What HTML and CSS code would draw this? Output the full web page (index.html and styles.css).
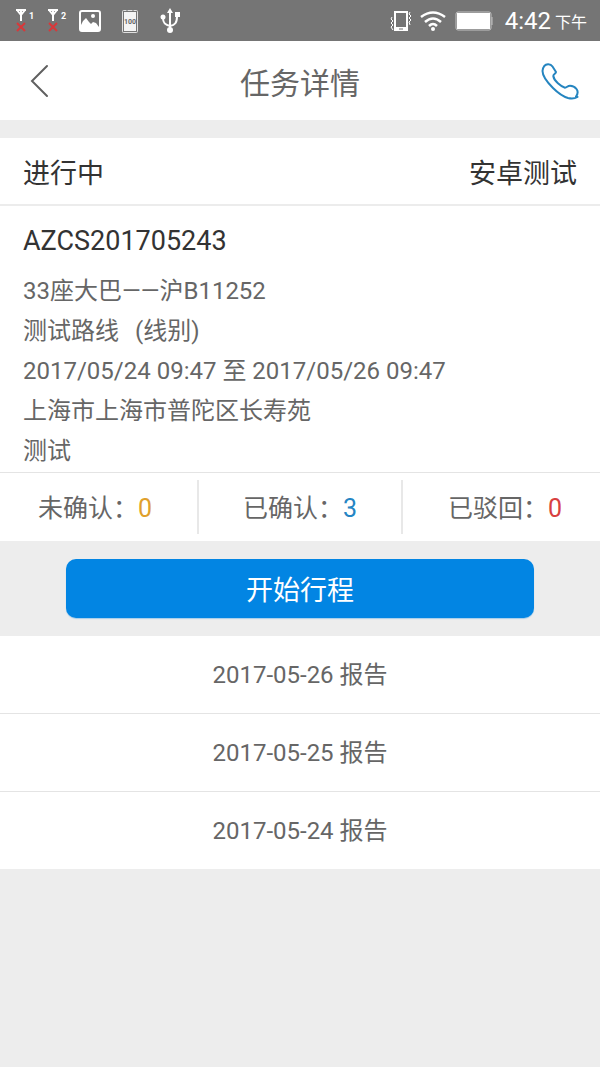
FILE: index.html
```html
<!DOCTYPE html>
<html lang="zh-CN">
<head>
    <meta charset="UTF-8">
    <meta name="viewport" content="width=device-width, initial-scale=1.0">
    <title>任务详情</title>
    <link rel="stylesheet" href="styles.css">
</head>
<body>
    <!-- 状态栏 -->
    <div class="status-bar">
        <div class="status-left">
            <svg class="icon-sim" width="20" height="26" viewBox="0 0 20 26" fill="none">
                <path d="M1 2h10M2 2l4 5 4-5M6 2v11" stroke="#fff" stroke-width="2"/>
                <path d="M2 15l8 8M10 15l-8 8" stroke="#d8383a" stroke-width="2"/>
                <text x="14" y="11" class="sim-num">1</text>
            </svg>
            <svg class="icon-sim" width="20" height="26" viewBox="0 0 20 26" fill="none">
                <path d="M1 2h10M2 2l4 5 4-5M6 2v11" stroke="#fff" stroke-width="2"/>
                <path d="M2 15l8 8M10 15l-8 8" stroke="#d8383a" stroke-width="2"/>
                <text x="14" y="11" class="sim-num">2</text>
            </svg>
            <svg class="icon-picture" width="22" height="22" viewBox="0 0 22 22">
                <rect x="1" y="1" width="20" height="20" rx="2" fill="none" stroke="#fff" stroke-width="2"/>
                <path d="M2 15l2-4 3-3 3 4 2 2 2-2 3 1 3 4v4H2z" fill="#fff"/>
                <circle cx="14" cy="6" r="2" fill="#fff"/>
            </svg>
            <svg class="icon-charge" width="16" height="24" viewBox="0 0 16 24">
                <rect x="0.5" y="1.5" width="15" height="22" rx="1" fill="none" stroke="#e0e0e0"/>
                <path d="M2 3h12v19H2z" fill="#f4f4f4"/>
                <path d="M5 0v3M11 0v3" stroke="#757575"/>
                <text x="8" y="15" class="charge-num">100</text>
            </svg>
            <svg class="icon-usb" width="20" height="26" viewBox="0 0 20 26" fill="none" stroke="#fff" stroke-width="2">
                <path d="M10 4v18M10 18c-5-1-7-3-7-8M10 18c5-1 7-3 7-10"/>
                <path d="M10 0l3 5H7z" fill="#fff" stroke="none"/>
                <circle cx="3" cy="9" r="2.5" fill="#fff" stroke="none"/>
                <path d="M15 4h5v5h-5z" fill="#fff" stroke="none"/>
                <circle cx="10" cy="22" r="3" fill="#fff" stroke="none"/>
            </svg>
        </div>
        <div class="status-right">
            <svg width="22" height="22" viewBox="0 0 22 22" fill="none" stroke="#fff">
                <path d="M5 2h12v18H5z" stroke-width="2"/>
                <path d="M5 17h12v4H5z" fill="#fff" stroke="none"/>
                <path d="M9 19h4" stroke="#757575"/>
                <path d="M2 7l-1 2 2 2-2 2 2 2-2 2 2 3M20 2l-1 2 2 2-2 2 2 2-2 2 1 3"/>
            </svg>
            <svg class="icon-wifi" width="26" height="20" viewBox="0 0 26 20" fill="none" stroke="#fff" stroke-width="2.5">
                <path d="M1 6q12-9 24 0M5 11q8-7 16 0M9 15q4-4 8 0"/>
                <circle cx="13" cy="18" r="2" fill="#fff" stroke="none"/>
            </svg>
            <svg class="icon-battery" width="38" height="20" viewBox="0 0 38 20">
                <rect x="1" y="1" width="35" height="18" rx="2" fill="none" stroke="#c4c4c4"/>
                <path d="M2 2h33v16H2z" fill="#fff"/>
                <path d="M37 6v8" stroke="#c4c4c4"/>
            </svg>
            <span class="clock">4:42</span>
            <span class="ampm">下午</span>
        </div>
    </div>

    <!-- 标题栏 -->
    <header class="nav-bar">
        <button type="button" class="nav-btn nav-back" aria-label="返回">
            <svg width="20" height="34" viewBox="0 0 20 34" fill="none" stroke="#606060" stroke-width="2" stroke-linecap="round">
                <path d="M17 2L2 17l15 15"/>
            </svg>
        </button>
        <h1>任务详情</h1>
        <a href="tel:" class="nav-btn nav-call" aria-label="电话">
            <svg width="38" height="38" viewBox="0 0 38 38" fill="none" stroke="#2585c0" stroke-width="2" stroke-linejoin="round">
                <path d="M1.5 9C2 5 4 2.500 7 2.300C9 2.200 10.500 3 11.500 4.500L15 10C15 11.500 12.300 12 12.300 14C13 19 20 24.500 24 25.700C26 25.700 26.500 23.700 29 23.700C31.500 23.700 34 25 35.500 27C37 29 36.800 32 35 34.500L36.500 35C34 36.500 31 37 27 36C22 34.500 17 31 12 26C6 20 1.500 13 1.500 9Z"/>
            </svg>
        </a>
    </header>

    <main>
        <section class="task">
            <div class="task-head">
                <span>进行中</span>
                <span>安卓测试</span>
            </div>
            <div class="task-info">
                <h2>AZCS201705243</h2>
                <p>33座大巴——沪B11252</p>
                <p class="route"><span>测试路线</span><span>(线别)</span></p>
                <p>2017/05/24 09:47 至 2017/05/26 09:47</p>
                <p>上海市上海市普陀区长寿苑</p>
                <p>测试</p>
            </div>
            <div class="task-count">
                <div>未确认：<span class="pending">0</span></div>
                <i class="divider"></i>
                <div>已确认：<span class="confirmed">3</span></div>
                <i class="divider"></i>
                <div>已驳回：<span class="rejected">0</span></div>
            </div>
        </section>

        <div class="action">
            <button type="button" class="start-btn">开始行程</button>
        </div>

        <!-- 每日报告 -->
        <ul class="report-list">
            <li><a href="#">2017-05-26 报告</a></li>
            <li><a href="#">2017-05-25 报告</a></li>
            <li><a href="#">2017-05-24 报告</a></li>
        </ul>
    </main>
</body>
</html>
```
FILE: styles.css
```css
* {
    box-sizing: border-box;
}
body {
    margin: 0;
    min-height: 100vh;
    background: #ededed;
    color: #666;
    font-family: Roboto, "Noto Sans CJK SC", sans-serif;
    font-size: 24px;
}
h1, h2, p, ul {
    margin: 0;
    padding: 0;
    font-weight: 400;
}
svg {
    display: block;
    flex-shrink: 0;
}

/* 状态栏 */
.status-bar {
    display: flex;
    justify-content: space-between;
    align-items: center;
    height: 41px;
    padding: 0 13px 0 15px;
    background: #757575;
    color: #fff;
}
.status-left,
.status-right {
    display: flex;
    align-items: center;
}
.icon-sim {
    margin-right: 12px;
}
.icon-picture {
    margin-right: 21px;
}
.icon-charge {
    margin-right: 22px;
}
.sim-num {
    fill: #fff;
    font-size: 9px;
    font-weight: 700;
}
.charge-num {
    fill: #666;
    font-size: 7px;
    font-weight: 700;
    text-anchor: middle;
}
.icon-wifi {
    margin-left: 8px;
}
.icon-battery {
    margin-left: 9px;
}
.clock {
    margin-left: 12px;
    font-size: 24px;
}
.ampm {
    margin-left: 4px;
    font-size: 16px;
}

/* 标题栏 */
.nav-bar {
    display: flex;
    justify-content: space-between;
    align-items: center;
    height: 79px;
    padding: 0 21px 0 30px;
    background: #fff;
}
.nav-bar h1 {
    padding-top: 6px;
    font-size: 30px;
    line-height: 40px;
}
.nav-btn {
    display: flex;
    align-items: center;
    height: 48px;
    padding: 0;
    border: none;
    background: none;
    cursor: pointer;
}
.nav-back {
    width: 39px;
}
.nav-call {
    justify-content: flex-end;
    width: 48px;
}

/* 任务信息 */
.task {
    margin-top: 18px;
    background: #fff;
}
.task-head {
    display: flex;
    justify-content: space-between;
    padding: 6px 23px 0;
    border-bottom: 2px solid #ececec;
    color: #333;
    font-size: 27px;
    line-height: 60px;
}
.task-info {
    padding: 5px 23px 1px;
    border-bottom: 1px solid #e4e4e4;
    line-height: 40px;
}
.task-info h2 {
    color: #333;
    font-size: 27px;
    line-height: 60px;
}
.route {
    display: flex;
    gap: 16px;
}
.task-count {
    display: flex;
    justify-content: space-between;
    align-items: center;
    padding: 7px 38px;
    font-size: 25px;
    line-height: 50px;
}
.task-count div {
    padding-top: 4px;
}
.divider {
    width: 2px;
    height: 54px;
    background: #e8e8e8;
}
.pending {
    color: #e0a02c;
}
.confirmed {
    color: #2585c4;
}
.rejected {
    color: #d8403f;
}

.action {
    padding: 18px 11%;
}
.start-btn {
    display: block;
    width: 100%;
    height: 59px;
    padding: 0;
    border: none;
    border-radius: 10px;
    background: #0285e3;
    box-shadow: 0 1px 1px #a4cdea;
    color: #fff;
    font-family: inherit;
    font-size: 27px;
    cursor: pointer;
}

/* 报告列表 */
.report-list {
    list-style: none;
    background: #fff;
}
.report-list li + li {
    border-top: 1px solid #e4e4e4;
}
.report-list a {
    display: block;
    padding-top: 2px;
    color: #666;
    line-height: 75px;
    text-align: center;
    text-decoration: none;
}
```
